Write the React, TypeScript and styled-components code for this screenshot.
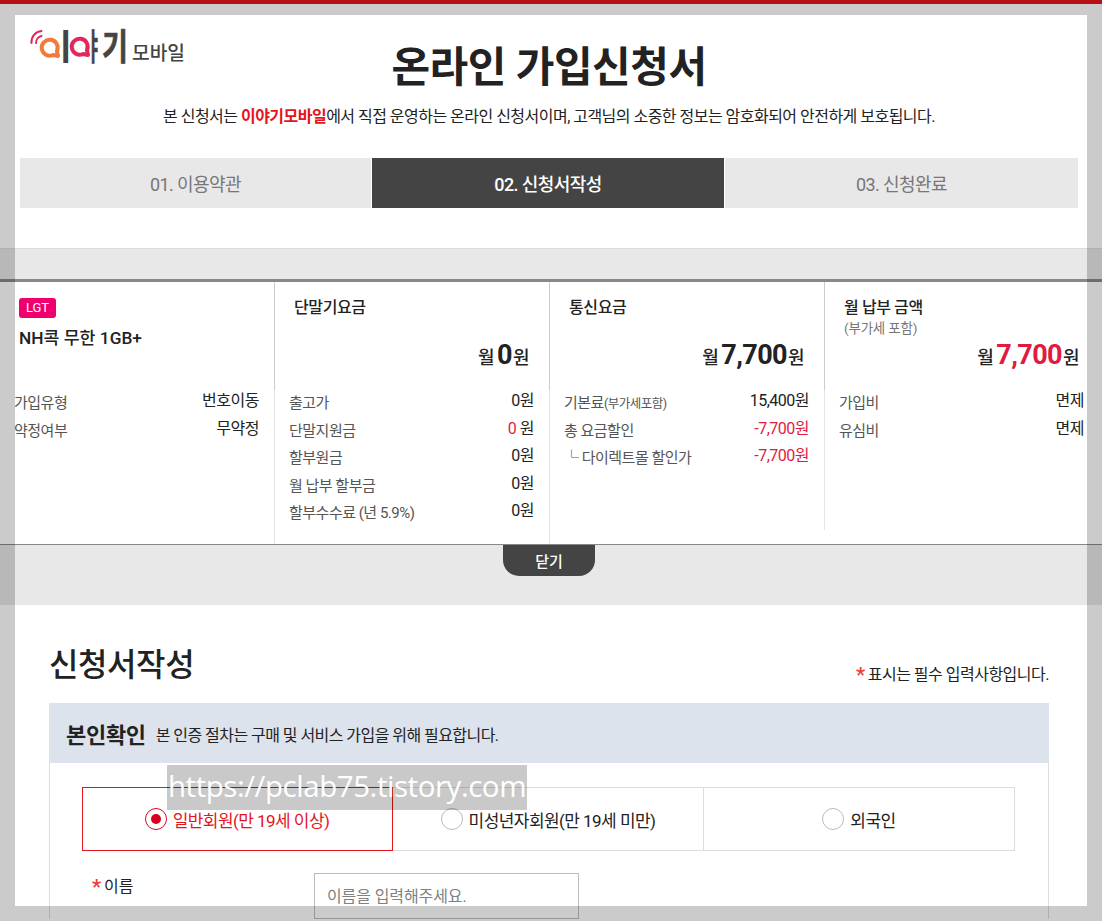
import React from "react";
import styled, { createGlobalStyle } from "styled-components";

const Global = createGlobalStyle`
  html, body { margin: 0; padding: 0; background: #fff; overflow: hidden; }
  * { box-sizing: border-box; }
  body { font-family: Roboto, "Noto Sans CJK KR", sans-serif; color: #222; }
`;

const Page = styled.div`
  position: relative;
  width: 1102px;
  height: 921px;
  overflow: hidden;
  background: #fff;
`;
const TopBar = styled.div`
  height: 4px;
  background: #e6141c;
`;
const Header = styled.header`
  height: 245px;
  padding: 11px 24px 0 20px;
  border-bottom: 1px solid #ddd;
  display: flex;
  flex-direction: column;
`;
const HeadGrid = styled.div`
  display: grid;
  height: 143px;
`;
const LogoSvg = styled.svg`
  grid-area: 1 / 1;
  justify-self: start;
  margin-left: 10px;
`;
const HeadText = styled.div`
  grid-area: 1 / 1;
  text-align: center;
`;
const Title = styled.h1`
  margin: 24px 0 0;
  font-size: 42px;
  line-height: 58px;
  letter-spacing: -0.5px;
  font-weight: 700;
  color: #222;
`;
const Lead = styled.p`
  margin: 9px 0 0;
  font-size: 16px;
  line-height: 22px;
  letter-spacing: -0.52px;
  color: #222;
  em { font-style: normal; font-weight: 700; color: #e6141c; }
`;
const Steps = styled.div`
  display: grid;
  grid-template-columns: 351px 352px 1fr;
  column-gap: 1px;
`;
const Step = styled.div<{ $on?: boolean }>`
  height: 50px;
  display: flex;
  align-items: center;
  justify-content: center;
  font-size: 18px;
  letter-spacing: -0.6px;
  font-weight: ${p => (p.$on ? 500 : 400)};
  background: ${p => (p.$on ? "#444" : "#e8e8e8")};
  color: ${p => (p.$on ? "#fff" : "#777")};
`;
const Band = styled.div<{ $h: number }>`
  height: ${p => p.$h}px;
  background: #e8e8e8;
`;
const Summary = styled.section`
  height: 266px;
  border-top: 3px solid #888;
  border-bottom: 1px solid #888;
  display: grid;
  grid-template-columns: repeat(4, 275px);
  align-items: start;
`;
const Col = styled.div``;
const ColTop = styled.div<{ $last?: boolean }>`
  height: 108px;
  padding: 16px 0 0 19px;
  border-right: 1px solid ${p => (p.$last ? "transparent" : "#ccc")};
  display: flex;
  flex-direction: column;
`;
const Badge = styled.span`
  align-self: flex-start;
  width: 37px;
  height: 20px;
  border-radius: 3px;
  background: #f0006e;
  color: #fff;
  font-size: 13px;
  line-height: 20px;
  text-align: center;
`;
const Product = styled.div`
  margin-top: 9px;
  font-size: 17.3px;
  line-height: 22px;
  font-weight: 500;
  color: #222;
`;
const ColTitle = styled.div`
  font-size: 16px;
  line-height: 20px;
  letter-spacing: -0.4px;
  font-weight: 500;
  color: #222;
`;
const ColNote = styled.div`
  font-size: 13.5px;
  line-height: 20px;
  letter-spacing: -0.2px;
  color: #777;
`;
const Price = styled.div`
  margin: auto 20px 16px 0;
  text-align: right;
  font-size: 18px;
  line-height: 32px;
  letter-spacing: -0.5px;
  font-weight: 500;
  color: #222;
`;
const Amount = styled.b<{ $red?: boolean }>`
  font-size: 27px;
  font-weight: 700;
  letter-spacing: -0.6px;
  margin: 0 1px 0 3px;
  color: ${p => (p.$red ? "#e11b3f" : "#222")};
`;
const List = styled.dl<{ $h: number; $last?: boolean }>`
  margin: 0;
  height: ${p => p.$h}px;
  padding: 0 15px 0 14px;
  border-right: 1px solid ${p => (p.$last ? "transparent" : "#e4e4e4")};
`;
const ListRow = styled.div`
  height: 27.6px;
  display: flex;
  justify-content: space-between;
  align-items: flex-start;
`;
const Label = styled.dt`
  padding-top: 1px;
  font-size: 15px;
  line-height: 24px;
  letter-spacing: -0.5px;
  color: #555;
  small { font-size: 12.5px; }
`;
const Value = styled.dd<{ $red?: boolean }>`
  margin: -1px 0 0;
  font-size: 16px;
  line-height: 24px;
  letter-spacing: -0.5px;
  color: ${p => (p.$red ? "#e11b3f" : "#222")};
`;
const RedNum = styled.span`
  color: #e11b3f;
`;
const CloseWrap = styled.div`
  height: 60px;
  background: #e8e8e8;
  display: flex;
  justify-content: center;
  padding-right: 4px;
`;
const CloseBtn = styled.button`
  width: 92px;
  height: 31px;
  border: 0;
  padding: 0;
  border-radius: 0 0 16px 16px;
  background: #444;
  color: #fff;
  font: 500 15px Roboto, "Noto Sans CJK KR", sans-serif;
`;
const Form = styled.section`
  padding: 0 53px 0 49px;
`;
const FormHead = styled.div`
  height: 98px;
  display: flex;
  justify-content: space-between;
  align-items: flex-end;
`;
const FormTitle = styled.h2`
  margin: 0 0 16px;
  font-size: 32px;
  line-height: 44px;
  letter-spacing: -0.4px;
  font-weight: 500;
  color: #222;
`;
const Req = styled.p`
  margin: 0 0 17px;
  font-size: 16px;
  line-height: 22px;
  letter-spacing: -0.5px;
  color: #222;
`;
const Star = styled.span`
  color: #f03c3c;
  font-size: 20px;
  line-height: 1;
  font-weight: 700;
  margin-right: 3px;
  vertical-align: -2px;
`;
const Panel = styled.div`
  border-right: 1px solid #ddd;
  border-left: 1px solid #ddd;
`;
const PanelHead = styled.div`
  height: 60px;
  margin: 0 -1px;
  padding: 0 17px;
  background: #dde3ec;
  display: flex;
  align-items: center;
  gap: 10px;
`;
const PanelTitle = styled.h3`
  margin: 0;
  font-size: 22px;
  letter-spacing: -0.3px;
  font-weight: 700;
  color: #222;
`;
const PanelSub = styled.span`
  font-size: 16px;
  letter-spacing: -0.55px;
  color: #222;
  padding-top: 1px;
`;
const Radios = styled.div`
  margin: 24px 33px 0 32px;
  display: grid;
  grid-template-columns: 311px 311px 1fr;
  height: 64px;
  border: 1px solid #ddd;
  border-left: 0;
`;
const RadioItem = styled.label<{ $on?: boolean; $last?: boolean }>`
  display: flex;
  align-items: center;
  justify-content: center;
  gap: 6px;
  font-size: 17px;
  letter-spacing: -0.55px;
  color: ${p => (p.$on ? "#e6141c" : "#222")};
  border-right: ${p => (p.$last ? "0" : "1px solid #ddd")};
  outline: ${p => (p.$on ? "1px solid #e6141c" : "none")};
  outline-offset: -1px;
  margin: ${p => (p.$on ? "-1px 0" : "0")};
`;
const Dot = styled.span<{ $on?: boolean }>`
  width: 22px;
  height: 22px;
  border-radius: 50%;
  border: 1px solid ${p => (p.$on ? "#e0061c" : "#bbb")};
  background: #fff;
  display: flex;
  align-items: center;
  justify-content: center;
  &::after {
    content: "";
    width: 10px;
    height: 10px;
    border-radius: 50%;
    background: ${p => (p.$on ? "#d8001a" : "transparent")};
  }
`;
const NameRow = styled.div`
  margin-top: 22px;
  padding-left: 42px;
  display: flex;
  align-items: flex-start;
`;
const NameLabel = styled.label`
  width: 222px;
  padding-top: 2px;
  font-size: 16px;
  line-height: 24px;
  color: #222;
`;
const NameInput = styled.input`
  width: 265px;
  height: 46px;
  border: 1px solid #bbb;
  padding: 0 12px;
  font: 16px Roboto, "Noto Sans CJK KR", sans-serif;
  letter-spacing: -0.1px;
  outline: 0;
  &::placeholder { color: #808080; opacity: 1; }
`;
const Frame = styled.div`
  position: absolute;
  inset: 0;
  border: 15px solid rgba(0, 0, 0, 0.205);
  pointer-events: none;
`;
const Watermark = styled.div`
  position: absolute;
  left: 167px;
  top: 765px;
  width: 360px;
  height: 45px;
  background: rgba(0, 0, 0, 0.21);
  color: #fff;
  font: 400 29.5px/42px "Open Sans", sans-serif;
  letter-spacing: -0.45px;
  white-space: nowrap;
  overflow: hidden;
  text-align: center;
`;

const Logo = () => (
  <LogoSvg width="160" height="60" viewBox="30 15 160 60" role="img" aria-label="이야기 모바일">
    <g fill="none" strokeLinecap="round">
      <path d="M31.5 43 A11 11 0 0 1 41.5 31" stroke="#e2285a" strokeWidth="2" />
      <path d="M36 43 A7 7 0 0 1 41.5 36" stroke="#e2285a" strokeWidth="2" />
      <path d="M53 55 A8 8 0 1 1 57 51 L58 56 Z" stroke="#f47a3c" strokeWidth="4" strokeLinejoin="round" />
      <path d="M83 54 A8 8 0 1 1 87 50 L88 55 Z" stroke="#e2285a" strokeWidth="4" strokeLinejoin="round" />
    </g>
    <g fontFamily="'Noto Sans CJK KR', sans-serif" fill="#444" fontWeight="700">
      <text x="49" y="60" fontSize="36">ㅣ</text>
      <text x="86" y="60" fontSize="36" textLength="16" lengthAdjust="spacingAndGlyphs" stroke="#444" strokeWidth="0.7">ㅑ</text>
      <text x="102" y="60" fontSize="36" textLength="26" lengthAdjust="spacingAndGlyphs" stroke="#444" strokeWidth="0.7">기</text>
      <text x="132" y="60" fontSize="19" fontWeight="500" textLength="53" lengthAdjust="spacingAndGlyphs">모바일</text>
    </g>
  </LogoSvg>
);

type Row = { l: React.ReactNode; v: React.ReactNode; red?: boolean };
const Rows = ({ rows, h, last }: { rows: Row[]; h: number; last?: boolean }) => (
  <List $h={h} $last={last}>
    {rows.map((r, i) => (
      <ListRow key={i}>
        <Label>{r.l}</Label>
        <Value $red={r.red}>{r.v}</Value>
      </ListRow>
    ))}
  </List>
);

export default function App() {
  return (
    <Page>
      <Global />
      <TopBar />
      <Header>
        <HeadGrid>
          <Logo />
          <HeadText>
            <Title>온라인 가입신청서</Title>
            <Lead>
              본 신청서는 <em>이야기모바일</em>에서 직접 운영하는 온라인 신청서이며, 고객님의 소중한 정보는 암호화되어 안전하게 보호됩니다.
            </Lead>
          </HeadText>
        </HeadGrid>
        <Steps>
          <Step>01. 이용약관</Step>
          <Step $on>02. 신청서작성</Step>
          <Step>03. 신청완료</Step>
        </Steps>
      </Header>
      <Band $h={30} />
      <Summary>
        <Col>
          <ColTop>
            <Badge>LGT</Badge>
            <Product>NH콕 무한 1GB+</Product>
          </ColTop>
          <Rows h={154} rows={[{ l: "가입유형", v: "번호이동" }, { l: "약정여부", v: "무약정" }]} />
        </Col>
        <Col>
          <ColTop>
            <ColTitle>단말기요금</ColTitle>
            <Price>월<Amount>0</Amount>원</Price>
          </ColTop>
          <Rows
            h={154}
            rows={[
              { l: "출고가", v: "0원" },
              { l: "단말지원금", v: <><RedNum>0</RedNum> 원</> },
              { l: "할부원금", v: "0원" },
              { l: "월 납부 할부금", v: "0원" },
              { l: "할부수수료 (년 5.9%)", v: "0원" },
            ]}
          />
        </Col>
        <Col>
          <ColTop>
            <ColTitle>통신요금</ColTitle>
            <Price>월<Amount>7,700</Amount>원</Price>
          </ColTop>
          <Rows
            h={140}
            rows={[
              { l: <>기본료<small>(부가세포함)</small></>, v: "15,400원" },
              { l: "총 요금할인", v: "-7,700원", red: true },
              { l: "└ 다이렉트몰 할인가", v: "-7,700원", red: true },
            ]}
          />
        </Col>
        <Col>
          <ColTop $last>
            <ColTitle>월 납부 금액</ColTitle>
            <ColNote>(부가세 포함)</ColNote>
            <Price>월<Amount $red>7,700</Amount>원</Price>
          </ColTop>
          <Rows h={140} last rows={[{ l: "가입비", v: "면제" }, { l: "유심비", v: "면제" }]} />
        </Col>
      </Summary>
      <CloseWrap>
        <CloseBtn>닫기</CloseBtn>
      </CloseWrap>
      <Form>
        <FormHead>
          <FormTitle>신청서작성</FormTitle>
          <Req><Star>*</Star>표시는 필수 입력사항입니다.</Req>
        </FormHead>
        <Panel>
          <PanelHead>
            <PanelTitle>본인확인</PanelTitle>
            <PanelSub>본 인증 절차는 구매 및 서비스 가입을 위해 필요합니다.</PanelSub>
          </PanelHead>
          <Radios>
            <RadioItem $on><Dot $on />일반회원(만 19세 이상)</RadioItem>
            <RadioItem><Dot />미성년자회원(만 19세 미만)</RadioItem>
            <RadioItem $last><Dot />외국인</RadioItem>
          </Radios>
          <NameRow>
            <NameLabel><Star>*</Star>이름</NameLabel>
            <NameInput placeholder="이름을 입력해주세요." />
          </NameRow>
        </Panel>
      </Form>
      <Frame />
      <Watermark>https://pclab75.tistory.com</Watermark>
    </Page>
  );
}
